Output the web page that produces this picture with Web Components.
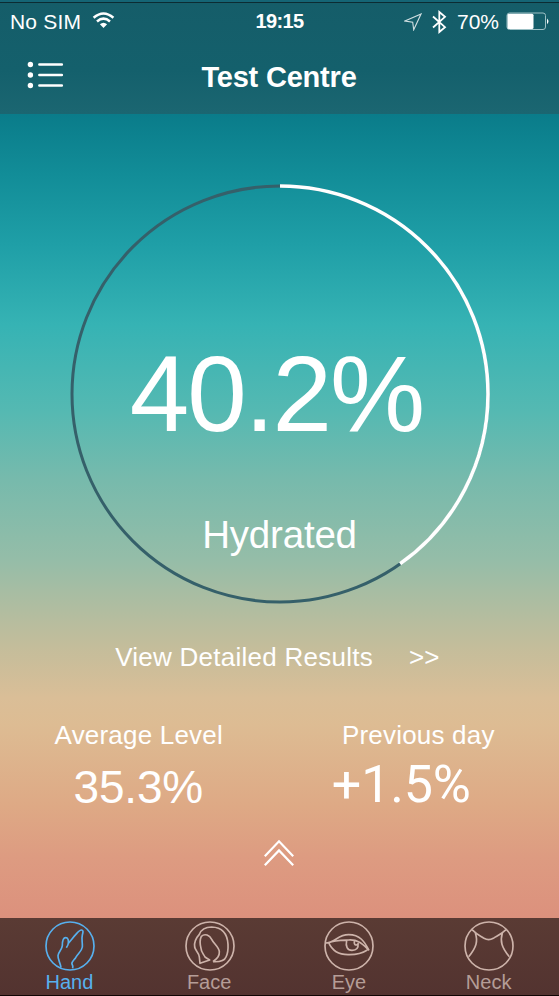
<!DOCTYPE html>
<html lang="en">
<head>
<meta charset="utf-8">
<title>Test Centre</title>
<style>
    body {
        margin: 0;
        font-family: "Liberation Sans", Arial, sans-serif;
        color: white;
    }
</style>
</head>
<body>
<test-screen>
    <status-bar slot="top"></status-bar>
    <nav-bar slot="top">Test Centre</nav-bar>

    <hydration-gauge value="40.2" label="Hydrated"></hydration-gauge>
    <results-link>View Detailed Results</results-link>
    <stat-row>
        <stat-item label="Average Level">35.3%</stat-item>
        <stat-item class="change" label="Previous day">+1.5%</stat-item>
    </stat-row>
    <pull-up></pull-up>

    <tab-item slot="tabs" icon="hand" active>Hand</tab-item>
    <tab-item slot="tabs" icon="face">Face</tab-item>
    <tab-item slot="tabs" icon="eye">Eye</tab-item>
    <tab-item slot="tabs" icon="neck">Neck</tab-item>
</test-screen>

<script>
class TestScreen extends HTMLElement {
    constructor() {
        super();
        this.attachShadow({ mode: 'open' }).innerHTML = `
        <style>
            :host {
                display: flex;
                flex-direction: column;
                width: 559px;
                height: 996px;
                overflow: hidden;
                background: linear-gradient(#0a7c8a 114px, #128d98 175px, #1f9fa7 245px, #36b3b4 325px, #55b9b2 412px, #77baac 480px, #95bda8 560px, #aabda2 597px, #c3bd9b 645px, #dabe97 698px, #ddbc93 724px, #dea985 806px, #dd9b81 858px, #dc917d 917px);
            }

            header {
                height: 111px;
                border-top: 1px solid #0c2c33;
                margin-top: 2px;
                background: linear-gradient(#155d69, #14606c 60%, #1b6671);
                box-shadow: 0 -2px #156575;
            }

            main {
                flex: 1;
                display: flex;
                flex-direction: column;
                align-items: center;
            }

            footer {
                display: flex;
                height: 77px;
                border-bottom: 1px solid #100504;
                background: linear-gradient(#5a3b34, #533330);
            }
        </style>
        <header><slot name="top"></slot></header>
        <main><slot></slot></main>
        <footer><slot name="tabs"></slot></footer>
        `;
    }
}

class StatusBar extends HTMLElement {
    constructor() {
        super();
        this.attachShadow({ mode: 'open' }).innerHTML = `
        <style>
            :host {
                display: grid;
                grid-template-columns: 1fr auto 1fr;
                align-items: center;
                height: 37px;
                padding: 0 10px;
                font-size: 21px;
                line-height: 37px;
            }

            .side {
                display: flex;
                align-items: center;
            }

            .left {
                letter-spacing: 0.2px;
            }

            .right {
                justify-content: flex-end;
            }

            .time {
                font-size: 20px;
                font-weight: bold;
                letter-spacing: -0.6px;
            }

            svg {
                fill: none;
                stroke: white;
            }

            .wifi {
                margin: -3px 0 0 11px;
            }

            .bluetooth {
                margin: 0 10px;
            }

            .battery {
                margin: 0 -1px 0 7px;
            }
        </style>
        <div class="side left">
            <span>No SIM</span>
            <svg class="wifi" width="23" height="17" viewBox="0 0 23 17" stroke-width="2.5">
                <path d="M1.6 5.8Q11.5-2.8 21.4 5.8M5 9.5Q11.5 3.8 18 9.5"/>
                <path d="M7.9 12.3Q11.5 9 15.1 12.3L11.5 16Z" fill="white" stroke="none"/>
            </svg>
        </div>
        <span class="time">19:15</span>
        <div class="side right">
            <svg width="18" height="18" viewBox="0 0 18 18" stroke-width="1.1" opacity=".8">
                <path d="M17 1L1 8L8.7 9.3L9.7 16.8Z"/>
            </svg>
            <svg class="bluetooth" width="15" height="24" viewBox="0 0 15 24" stroke-width="1.8">
                <path d="M1 6.5L13 17.2L7.3 22V2L13 6.8L1 17.5"/>
            </svg>
            <span>70%</span>
            <svg class="battery" width="44" height="19" viewBox="0 0 44 19">
                <rect x="1" y="1" width="38.5" height="16.5" rx="2.5" stroke="#9cc0c5"/>
                <rect x="1.5" y="1.7" width="26" height="15.2" rx="1.5" fill="white" stroke="none"/>
                <path d="M41 6.5Q44 9.3 41 12.2Z" fill="white" stroke="none"/>
            </svg>
        </div>
        `;
    }
}

class NavBar extends HTMLElement {
    constructor() {
        super();
        this.attachShadow({ mode: 'open' }).innerHTML = `
        <style>
            :host {
                display: grid;
                grid-template-columns: 1fr auto 1fr;
                align-items: center;
                height: 74px;
                padding: 0 27px;
            }

            svg {
                margin-top: -5px;
            }

            h1 {
                margin: 0 1px 0 0;
                font-size: 29px;
                letter-spacing: -0.2px;
            }
        </style>
        <svg width="37" height="28" viewBox="0 0 37 28" fill="white">
            <circle cx="3.4" cy="3.5" r="2.7"/>
            <circle cx="3.4" cy="14" r="2.7"/>
            <circle cx="3.4" cy="24.5" r="2.7"/>
            <path d="M12.4 3.5H34.8M12.4 14H34.8M12.4 24.5H34.8" stroke="white" stroke-width="2.6" stroke-linecap="round"/>
        </svg>
        <h1><slot></slot></h1>
        `;
    }
}

class HydrationGauge extends HTMLElement {
    constructor() {
        super();
        this.attachShadow({ mode: 'open' });
    }

    connectedCallback() {
        const value = this.getAttribute('value');
        this.shadowRoot.innerHTML = `
        <style>
            :host {
                display: grid;
                width: 420px;
                height: 420px;
                margin-top: 70px;
            }

            svg, span {
                grid-area: 1 / 1;
            }

            circle {
                fill: none;
                stroke: #35606a;
                stroke-width: 3;
            }

            .done {
                stroke: white;
                stroke-width: 3.6;
            }

            .value {
                place-self: center;
                font-size: 107px;
                line-height: 110px;
                letter-spacing: -2px;
                margin-right: 6px;
            }

            .label {
                place-self: end center;
                margin-bottom: 49px;
                font-size: 38.5px;
                line-height: 40px;
                letter-spacing: -0.2px;
            }
        </style>
        <svg viewBox="0 0 420 420">
            <circle cx="210" cy="210" r="208"/>
            <circle class="done" cx="210" cy="210" r="208" pathLength="100" stroke-dasharray="${value} 100" transform="rotate(-90 210 210)"/>
        </svg>
        <span class="value">${value}%</span>
        <span class="label">${this.getAttribute('label')}</span>
        `;
    }
}

class ResultsLink extends HTMLElement {
    constructor() {
        super();
        this.attachShadow({ mode: 'open' }).innerHTML = `
        <style>
            :host {
                display: flex;
                gap: 36px;
                margin: 33px 4px 0 0;
                font-size: 26px;
                line-height: 40px;
                letter-spacing: 0.25px;
            }
        </style>
        <span><slot></slot></span>
        <span>&gt;&gt;</span>
        `;
    }
}

class StatRow extends HTMLElement {
    constructor() {
        super();
        this.attachShadow({ mode: 'open' }).innerHTML = `
        <style>
            :host {
                display: grid;
                grid-template-columns: 1fr 1fr;
                width: 100%;
                margin-top: 43px;
            }
        </style>
        <slot></slot>
        `;
    }
}

class StatItem extends HTMLElement {
    constructor() {
        super();
        this.attachShadow({ mode: 'open' });
    }

    connectedCallback() {
        this.shadowRoot.innerHTML = `
        <style>
            :host {
                display: flex;
                flex-direction: column;
                align-items: center;
                gap: 12px;
            }

            .label {
                margin-right: 2px;
                font-size: 26px;
                line-height: 30px;
                letter-spacing: 0.2px;
            }

            .value {
                font-size: 46px;
                line-height: 50px;
                letter-spacing: -0.2px;
                margin-right: 3px;
            }

            :host(.change) .value {
                margin: -2px 36px 0 0;
                font: 52px/50px Roboto, sans-serif;
            }
        </style>
        <span class="label">${this.getAttribute('label')}</span>
        <span class="value"><slot></slot></span>
        `;
    }
}

class PullUp extends HTMLElement {
    constructor() {
        super();
        this.attachShadow({ mode: 'open' }).innerHTML = `
        <style>
            :host {
                display: block;
                height: 28px;
                margin: 27px 1px 0 0;
            }
        </style>
        <svg width="30" height="28" viewBox="0 0 30 28" fill="none" stroke="white" stroke-width="2.2">
            <path d="M.8 17.2L15 2.3L29.2 17.2M.8 26.3L15 11.4L29.2 26.3"/>
        </svg>
        `;
    }
}

const TAB_ICONS = {
    hand: 'M48 140C47 128 38 115 39 104C40 92 51 86 52 74C52 58 56 50 62 50C69 50 71 57 70 66Q70 72 64 80M70 67C78 58 84 50 92 41C100 32 104 26 110 27C116 28 114 34 112 42C109 54 113 66 112 78C110 92 98 98 92 110C86 118 78 124 81 129C84 134 84 138 83 142',
    face: 'M84 122C106 123 119 119 123 108C128 98 130 88 129 70C127 36 108 19 80 18C60 18 48 27 43 40C32 52 27 64 29 78C31 90 42 94 43 108L45 127L74 117Q64 111 60 108C55 98 48 92 48 82C44 66 45 54 49 46C60 36 74 43 80 55C86 68 102 78 103 92C104 106 96 112 84 122',
    eye: 'M3 66C34 66 40 41 74 41C108 41 122 62 135 88M14 65C24 88 44 101 72 101C98 102 116 96 130 87M14 65C32 58 52 58 74 57C104 55 118 72 135 88M68 58C64 76 70 88 84 88C98 88 104 80 102 68M92 58C88 72 96 76 104 67',
    neck: 'M24 26C40 42 50 45 60 52Q74 60 88 52C98 45 110 42 126 26M34 36C42 60 38 78 14 107M115 36C108 60 112 78 136 107'
};

class TabItem extends HTMLElement {
    constructor() {
        super();
        this.attachShadow({ mode: 'open' });
    }

    connectedCallback() {
        this.shadowRoot.innerHTML = `
        <style>
            :host {
                flex: 1;
                display: flex;
                flex-direction: column;
                align-items: center;
                padding-top: 3px;
                color: #b59d97;
                --line: #cdb3aa;
            }

            :host([active]) {
                color: #57b0ee;
                --line: #57b0ee;
            }

            svg {
                fill: none;
                stroke: var(--line);
                stroke-width: 5;
                stroke-linejoin: round;
            }

            span {
                margin-right: 1px;
                font-size: 20px;
                line-height: 22px;
            }
        </style>
        <svg width="50" height="50" viewBox="0 0 150 150">
            <circle cx="75" cy="75" r="72"/>
            <path d="${TAB_ICONS[this.getAttribute('icon')]}"/>
        </svg>
        <span><slot></slot></span>
        `;
    }
}

customElements.define('test-screen', TestScreen);
customElements.define('status-bar', StatusBar);
customElements.define('nav-bar', NavBar);
customElements.define('hydration-gauge', HydrationGauge);
customElements.define('results-link', ResultsLink);
customElements.define('stat-row', StatRow);
customElements.define('stat-item', StatItem);
customElements.define('pull-up', PullUp);
customElements.define('tab-item', TabItem);
</script>
</body>
</html>
